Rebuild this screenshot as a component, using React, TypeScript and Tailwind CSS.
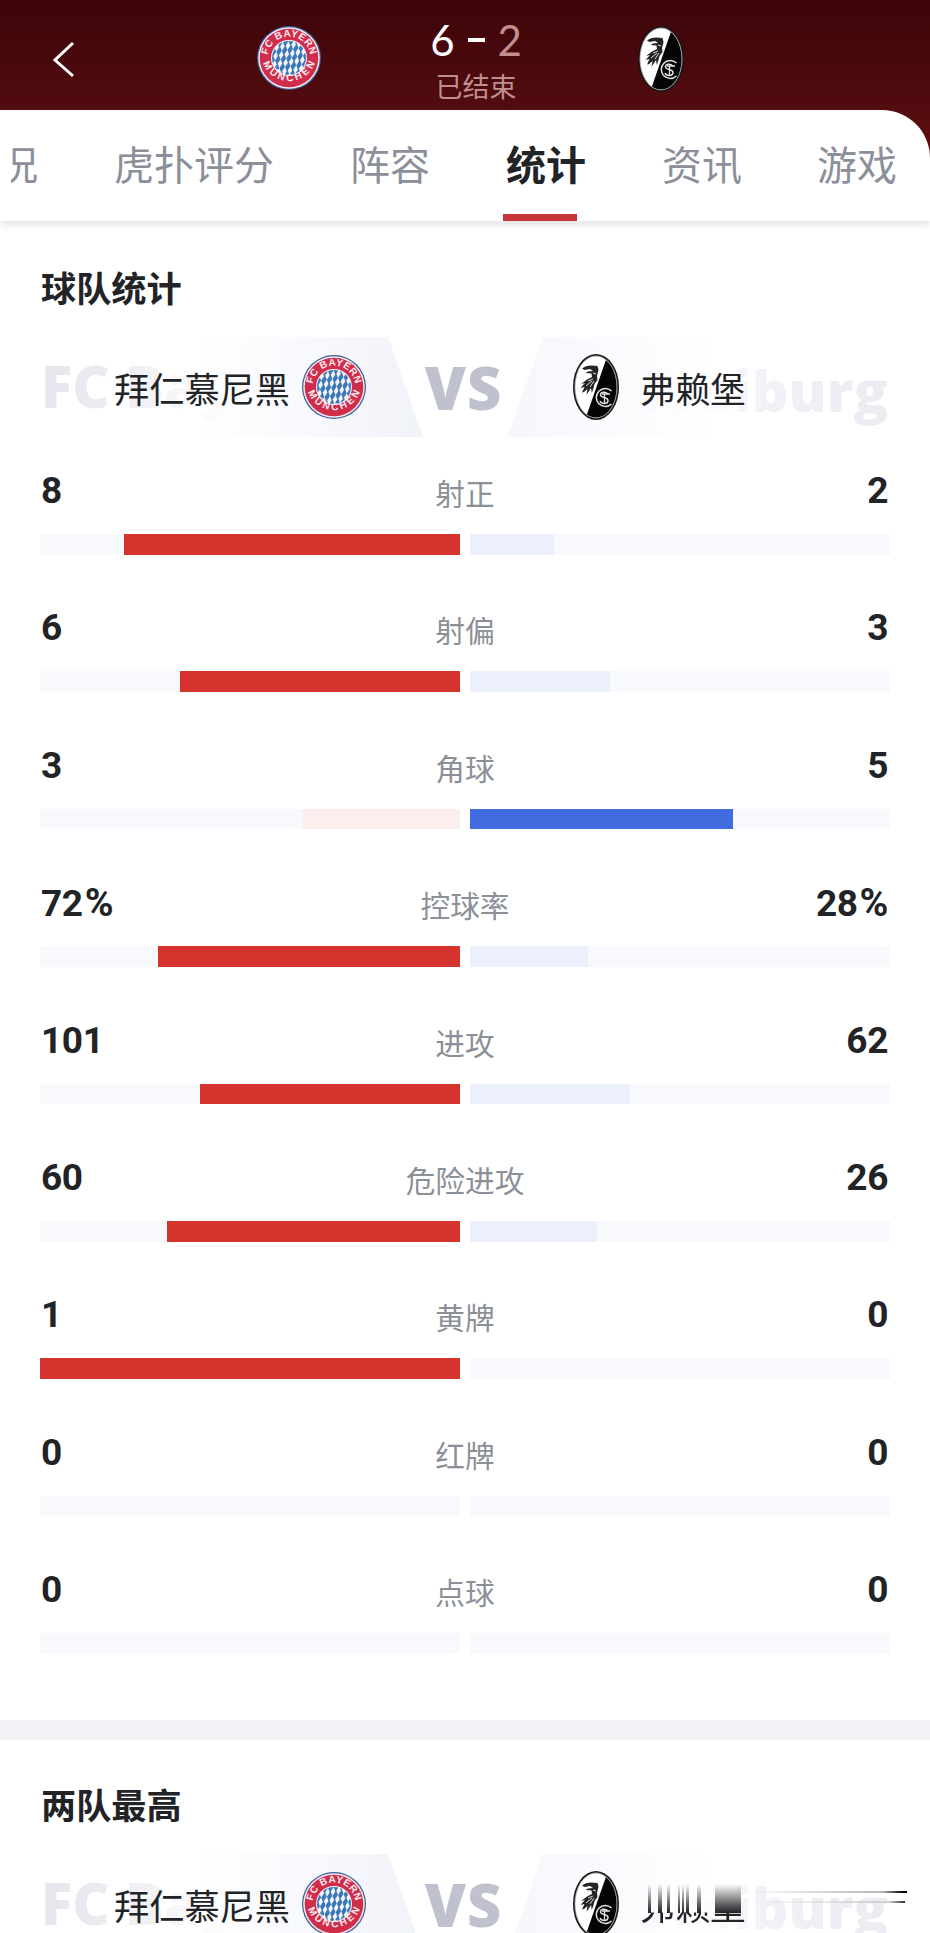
import React from "react";
import clsx from "clsx";

type Stat = {
  label: string;
  home: number;
  away: number;
  unit?: string;
};

const TABS = [
  { name: "虎扑评分", className: "ml-[76px]" },
  { name: "阵容", className: "ml-[76px]" },
  { name: "统计", className: "ml-[76px]", active: true },
  { name: "资讯", className: "ml-[76px]" },
  { name: "游戏", className: "ml-[75px]" },
];

const STATS: Stat[] = [
  { label: "射正", home: 8, away: 2 },
  { label: "射偏", home: 6, away: 3 },
  { label: "角球", home: 3, away: 5 },
  { label: "控球率", home: 72, away: 28, unit: "%" },
  { label: "进攻", home: 101, away: 62 },
  { label: "危险进攻", home: 60, away: 26 },
  { label: "黄牌", home: 1, away: 0 },
  { label: "红牌", home: 0, away: 0 },
  { label: "点球", home: 0, away: 0 },
];

// lozenges in the middle of the Bayern crest
const LOZENGES = [-2, -1, 0, 1, 2].flatMap((row) =>
  [-3, -2, -1, 0, 1, 2, 3].map((col) => ({
    x: 32 + col * 5.6 + row * -1.2,
    y: 32 + row * 8.6 + col * -0.9,
  }))
);

const BayernLogo = ({ id }: { id: string }) => (
  <svg viewBox="0 0 64 64" className="size-16 shrink-0">
    <defs>
      <clipPath id={`${id}-clip`}>
        <circle cx="32" cy="32" r="17" />
      </clipPath>
      <path id={`${id}-top`} d="M 11.3 38 A 21.5 21.5 0 1 1 52.7 38" />
      <path id={`${id}-bottom`} d="M 4.5 30 A 27.6 27.6 0 0 0 59.5 30" />
    </defs>
    <circle cx="32" cy="32" r="32" fill="#3c5a96" />
    <circle cx="32" cy="32" r="30.8" fill="#f3e9f1" />
    <circle cx="32" cy="32" r="29.3" fill="#cf2d4a" />
    <circle cx="32" cy="32" r="18" fill="#f5f4fa" />
    <g clipPath={`url(#${id}-clip)`} fill="#3a78b7">
      {LOZENGES.map(({ x, y }, idx) => (
        <path
          key={idx}
          d={`M${x + 1} ${y - 5.2} L${x + 2.7} ${y - 0.4} L${x - 1} ${y + 5.2} L${x - 2.7} ${y + 0.4} Z`}
        />
      ))}
    </g>
    <g
      fill="#fbeaf0"
      fontFamily="Liberation Sans, sans-serif"
      fontWeight="700"
      fontSize="10"
      textAnchor="middle"
    >
      <text>
        <textPath href={`#${id}-top`} startOffset="50%" textLength="61">
          FC BAYERN
        </textPath>
      </text>
      <text>
        <textPath href={`#${id}-bottom`} startOffset="50%" textLength="67">
          MÜNCHEN
        </textPath>
      </text>
    </g>
  </svg>
);

const FreiburgLogo = ({ id }: { id: string }) => (
  <svg viewBox="0 0 46 66" className="h-[66px] w-[46px] shrink-0">
    <defs>
      <clipPath id={id}>
        <ellipse cx="23" cy="33" rx="20.6" ry="30.6" />
      </clipPath>
    </defs>
    <ellipse cx="23" cy="33" rx="23" ry="33" fill="#151515" />
    <ellipse cx="23" cy="33" rx="21.5" ry="31.5" fill="#a3a3a3" />
    <g clipPath={`url(#${id})`}>
      <rect width="46" height="66" fill="#fff" />
      <path d="M35 0 L46 0 V66 H12 Z" fill="#050505" />
    </g>
    {/* griffin head */}
    <path
      d="M9 14.5 C13 11 18 11 24.5 12 L25.5 16 L24 22 L24.5 26 L21.5 30 L20.5 34 L18.8 39 L18 34 L15.5 38 L13.5 40.5 L14.5 35 L11 38 L9 38.5 L11.5 33 L7.5 34 L12 29 L8 30 L14 25.5 L19 23 L18.5 19.5 L12.5 19 L15 17.5 L20 17 L17 15 L11.5 16 Z"
      fill="#242424"
    />
    <path
      d="M20 19 L23 20 M15 27 L20 25 M13 32 L19 27 M17 33 L21 27"
      stroke="#d8d8d8"
      strokeWidth="1"
    />
    <g fill="none" stroke="#e2e2e2" strokeWidth="1.5">
      <path d="M38.5 37 A9 9 0 1 0 38.5 50" />
      <path d="M35 40 C32 37 27 38 27.5 41 C28 44 35 43 35 46.5 C35 50.5 28 50 27 47" />
      <path d="M31.5 40 V49 M29 40 H37" strokeWidth="1.3" />
    </g>
  </svg>
);

const MatchHeader = () => (
  <header className="flex h-[110px] shrink-0">
    <div className="w-[53px] pt-[41px]">
      <svg viewBox="0 0 22 38" className="ml-[52px] h-[38px] w-[22px]">
        <path
          d="M21 2 L3 19 L21 35"
          fill="none"
          stroke="#fff"
          strokeWidth="3"
        />
      </svg>
    </div>
    <div className="ml-[204px] w-[65px] pt-[26px]">
      <BayernLogo id="header-home" />
    </div>
    <div className="ml-[66px] flex w-[176px] flex-col items-center">
      <div className="mt-[14px] flex h-[52px] items-center font-[Lato] text-[42px] leading-[52px] text-white">
        <span>6</span>
        <span className="mx-[13px] h-[4px] w-[17px] bg-white" />
        <span className="text-[#c48d8e]">2</span>
      </div>
      <span className="text-[27px] leading-[40px] text-[#bf8f90]">已结束</span>
    </div>
    <div className="ml-[74px] pt-[26px]">
      <FreiburgLogo id="header-away" />
    </div>
  </header>
);

const TabBar = () => (
  <nav className="relative z-10 flex h-[111px] shrink-0 overflow-hidden rounded-tr-[48px] bg-white text-[40px] leading-[107px] whitespace-nowrap text-[#8b8f99]">
    {/* first tab is scrolled half out of view */}
    <div className="ml-[11px] flex w-[27px] shrink-0 justify-end overflow-hidden">
      <span>况</span>
    </div>
    {TABS.map(({ name, className, active }) => (
      <div
        key={name}
        className={clsx(
          "relative h-full shrink-0",
          className,
          active && "font-bold text-[#222326]"
        )}
      >
        {name}
        {active ? (
          <span className="absolute bottom-0 -left-[3px] h-[7px] w-[74px] bg-[#c8363a]" />
        ) : null}
      </div>
    ))}
  </nav>
);

const VersusBand = ({ id, smudged }: { id: string; smudged?: boolean }) => (
  <div className="relative mx-10 flex h-[100px] shrink-0">
    {/* club names in the background */}
    <span className="absolute top-[9px] left-[1px] bg-gradient-to-r from-[#e5e6ed] via-[#ececf2] via-25% to-[#fdfdfe] to-60% bg-clip-text font-['Open_Sans'] text-[58px] leading-[80px] font-extrabold whitespace-nowrap text-transparent">
      FC Bayern
    </span>
    <span className="absolute top-[13px] right-[2px] bg-gradient-to-l from-[#ebecf2] via-[#f1f2f7] via-50% to-[#fcfcfe] to-70% bg-clip-text font-['Open_Sans'] text-[57px] leading-[80px] font-extrabold text-transparent">
      Freiburg
    </span>
    <div className="flex w-[383px] items-center justify-end bg-linear-to-r from-transparent from-40% to-[#f1f3fa] pr-[57px] [clip-path:polygon(0_0,348px_0,383px_100%,0_100%)]">
      <span className="relative top-[1px] mr-[12px] text-[35.2px] text-[#222326]">
        拜仁慕尼黑
      </span>
      <BayernLogo id={`${id}-home`} />
    </div>
    <div className="flex w-[84px] justify-center pt-[10px] pr-[3px] font-['Open_Sans'] text-[59.5px] leading-[80px] font-extrabold tracking-[1px] text-[#c0c1ce]">
      VS
    </div>
    <div className="flex grow items-center bg-linear-to-l from-transparent from-45% to-[#f5f7fc] pl-[66px] [clip-path:polygon(36px_0,120%_0,120%_100%,0_100%)]">
      <FreiburgLogo id={`${id}-away`} />
      <div className="relative top-[1px] ml-[21px] text-[35.2px] leading-[52px] text-[#222326]">
        <span
          className={clsx(
            "block",
            smudged &&
              "[mask-image:linear-gradient(to_bottom,transparent_33px,black_34px)]"
          )}
        >
          弗赖堡
        </span>
        {smudged ? <Smudge /> : null}
      </div>
    </div>
  </div>
);

const STREAKS = [
  "ml-[8px] w-[3px]",
  "ml-[7px] w-[4px]",
  "ml-[5px] w-[3px]",
  "ml-[8px] w-[2px]",
  "ml-[2px] w-[2px]",
  "ml-[2px] w-[3px]",
  "ml-[8px] w-[4px]",
  "ml-[14px] w-[26px]",
];

// smeared upper half of the club name and the two strokes beside it
const Smudge = () => (
  <>
    <div className="absolute top-[5px] left-0 flex h-[29px]">
      {STREAKS.map((streak, idx) => (
        <span
          key={idx}
          className={clsx(
            "shrink-0 bg-linear-to-b from-transparent via-[#999] via-45% to-[#222326]",
            streak
          )}
        />
      ))}
    </div>
    <div className="absolute top-[12px] left-[107px] flex w-[160px] flex-col gap-[8px]">
      <span className="h-[2px] bg-linear-to-r from-transparent via-[#b5b5b5] via-85% to-black" />
      <span className="h-[2px] w-[158px] bg-linear-to-r from-transparent via-[#d0d0d0] via-90% to-[#333]" />
    </div>
  </>
);

const StatValue = ({ value, unit }: { value: number; unit: string }) => (
  <span>
    {value}
    {unit ? <span className="ml-[2px] text-[39px]">{unit}</span> : null}
  </span>
);

const StatRow = ({ label, home, away, unit = "" }: Stat) => {
  const total = home + away || 1;
  return (
    <div className="h-[137.4px]">
      <div className="relative flex h-[97px] justify-between pt-[31px] pr-[2px] pl-[1px] font-[Roboto] text-[37px] leading-[46px] font-bold tracking-[-0.4px] text-[#222326]">
        <StatValue value={home} unit={unit} />
        <span className="absolute inset-x-0 top-[33px] text-center font-['Noto_Sans_CJK_SC'] text-[29.7px] font-normal tracking-normal text-[#8b8f97]">
          {label}
        </span>
        <StatValue value={away} unit={unit} />
      </div>
      <div className="flex h-[20.6px] gap-[10px]">
        <div className="flex flex-1 justify-end bg-[#f8f9fc]">
          <div
            className={home >= away ? "bg-[#d4332e]" : "bg-[#fdeeee]"}
            style={{ width: `${(home / total) * 100}%` }}
          />
        </div>
        <div className="flex flex-1 bg-[#f8f9fc]">
          <div
            className={away > home ? "bg-[#416ce0]" : "bg-[#ecf0fd]"}
            style={{ width: `${(away / total) * 100}%` }}
          />
        </div>
      </div>
    </div>
  );
};

const SectionTitle = ({ children }: { children: React.ReactNode }) => (
  <h2 className="mb-[24px] ml-[41px] pt-[38px] text-[35.2px] leading-[52px] font-bold text-[#222326]">
    {children}
  </h2>
);

const App = () => {
  return (
    <div className="flex h-[1933px] w-[930px] flex-col overflow-hidden bg-white font-['Noto_Sans_CJK_SC',sans-serif]">
      <div className="relative z-10 h-[221px] shrink-0 bg-linear-to-b from-[#3c0508] via-[#530c0f] via-50% to-[#6a0a0d] to-75% shadow-[0_3px_8px_rgba(0,0,0,0.13)]">
        <MatchHeader />
        <TabBar />
      </div>

      {/* 球队统计 */}
      <section className="h-[1499px] shrink-0 pt-[2px]">
        <SectionTitle>球队统计</SectionTitle>
        <VersusBand id="stats" />
        <div className="mx-10">
          {STATS.map((stat) => (
            <StatRow key={stat.label} {...stat} />
          ))}
        </div>
      </section>

      <div className="h-5 shrink-0 bg-[#f1f2f6]" />

      {/* 两队最高 */}
      <section className="shrink-0">
        <SectionTitle>两队最高</SectionTitle>
        <VersusBand id="best" smudged />
      </section>
    </div>
  );
};

export default App;
